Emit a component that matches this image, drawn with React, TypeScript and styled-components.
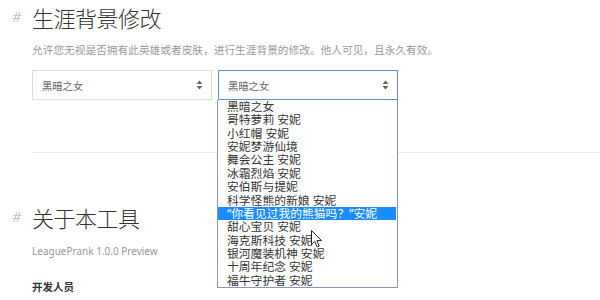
import styled, { createGlobalStyle } from 'styled-components';

const skins = [
  '黑暗之女',
  '哥特萝莉 安妮',
  '小红帽 安妮',
  '安妮梦游仙境',
  '舞会公主 安妮',
  '冰霜烈焰 安妮',
  '安伯斯与提妮',
  '科学怪熊的新娘 安妮',
  '“你看见过我的熊猫吗？”安妮',
  '甜心宝贝 安妮',
  '海克斯科技 安妮',
  '银河魔装机神 安妮',
  '十周年纪念 安妮',
  '福牛守护者 安妮',
];

const GlobalStyle = createGlobalStyle`
  html, body {
    margin: 0;
    padding: 0;
    background: #fff;
  }
  body {
    font-family: "Noto Sans", "Noto Sans CJK SC", sans-serif;
    color: #333;
    overflow: hidden;
  }
`;

const Page = styled.div`
  position: relative;
  padding-left: 32px;
  width: 600px;
  height: 300px;
  box-sizing: border-box;
`;

const Heading = styled.h2<{ $top: number }>`
  position: relative;
  margin: ${({ $top }) => $top}px 0 0;
  font-size: 22px;
  font-weight: 300;
  line-height: 37px;
  letter-spacing: -0.5px;
  color: #333;
`;

const Hash = styled.span`
  position: absolute;
  left: -21px;
  top: 0;
  font-size: 14px;
  line-height: 35px;
  color: #aaa;
  font-family: "DejaVu Sans", sans-serif;
  font-weight: 300;
`;

const Desc = styled.p<{ $top: number; $size?: number }>`
  margin: ${({ $top }) => $top}px 0 0;
  font-size: ${({ $size }) => $size ?? 10.7}px;
  line-height: 16px;
  color: #999;
`;

const Strong = styled.p<{ $top: number }>`
  margin: ${({ $top }) => $top}px 0 0;
  font-size: 10.5px;
  line-height: 16px;
  font-weight: 700;
  color: #333;
`;

const SelectRow = styled.div`
  display: flex;
  gap: 6px;
  margin-top: 12px;
`;

const SelectWrap = styled.div`
  position: relative;
`;

const SelectBox = styled.div<{ $open?: boolean }>`
  width: 180px;
  height: 30px;
  box-sizing: border-box;
  display: flex;
  align-items: center;
  justify-content: space-between;
  padding: 0 8px 0 9px;
  border: 1px solid ${({ $open }) => ($open ? '#5b8fd0' : '#dedede')};
  background: #fff;
  font-size: 10.3px;
  color: #666;
`;

const List = styled.ul`
  position: absolute;
  top: 100%;
  left: -1px;
  width: 181px;
  margin: 0;
  padding: 0;
  list-style: none;
  box-sizing: border-box;
  border: 1px solid #8a93b8;
  border-top: none;
  background: #fff;
  z-index: 2;
`;

const Item = styled.li<{ $active?: boolean }>`
  height: 13.36px;
  line-height: 13.36px;
  padding-left: 9px;
  margin-right: 1px;
  font-size: 11.8px;
  white-space: nowrap;
  color: ${({ $active }) => ($active ? '#fff' : '#333')};
  background: ${({ $active }) => ($active ? '#1a8cff' : 'transparent')};
`;

const Divider = styled.hr`
  margin: 52px 0 0;
  border: none;
  border-top: 1px solid #ececec;
`;

const Cursor = styled.svg`
  position: absolute;
  left: 311px;
  top: 230px;
  z-index: 3;
`;

const Arrows = () => (
  <svg width="7" height="10" viewBox="0 0 7 10">
    <path d="M3.5 0.5 L6.5 4 L0.5 4 Z" fill="#666" />
    <path d="M3.5 9.5 L6.5 6 L0.5 6 Z" fill="#666" />
  </svg>
);

export default function App() {
  return (
    <>
      <GlobalStyle />
      <Page>
        <Heading $top={0}>
          <Hash>#</Hash>生涯背景修改
        </Heading>
        <Desc $top={5}>
          允许您无视是否拥有此英雄或者皮肤，进行生涯背景的修改。他人可见，且永久有效。
        </Desc>
        <SelectRow>
          <SelectWrap>
            <SelectBox>
              黑暗之女
              <Arrows />
            </SelectBox>
          </SelectWrap>
          <SelectWrap>
            <SelectBox $open>
              黑暗之女
              <Arrows />
            </SelectBox>
            <List>
              {skins.map((s, i) => (
                <Item key={s} $active={i === 8}>
                  {s}
                </Item>
              ))}
            </List>
          </SelectWrap>
        </SelectRow>
        <Divider />
        <Heading $top={47}>
          <Hash>#</Hash>关于本工具
        </Heading>
        <Desc $top={6} $size={10}>
          LeaguePrank 1.0.0 Preview
        </Desc>
        <Strong $top={20}>开发人员</Strong>
        <Cursor width="12" height="18" viewBox="0 0 12 18">
          <path
            d="M0.5 0.5 L0.5 14.5 L3.8 11.4 L6.2 17 L8.3 16.1 L6 10.6 L10.5 10.6 Z"
            fill="#fff"
            stroke="#222"
            strokeWidth="1"
            strokeLinejoin="round"
          />
        </Cursor>
      </Page>
    </>
  );
}
